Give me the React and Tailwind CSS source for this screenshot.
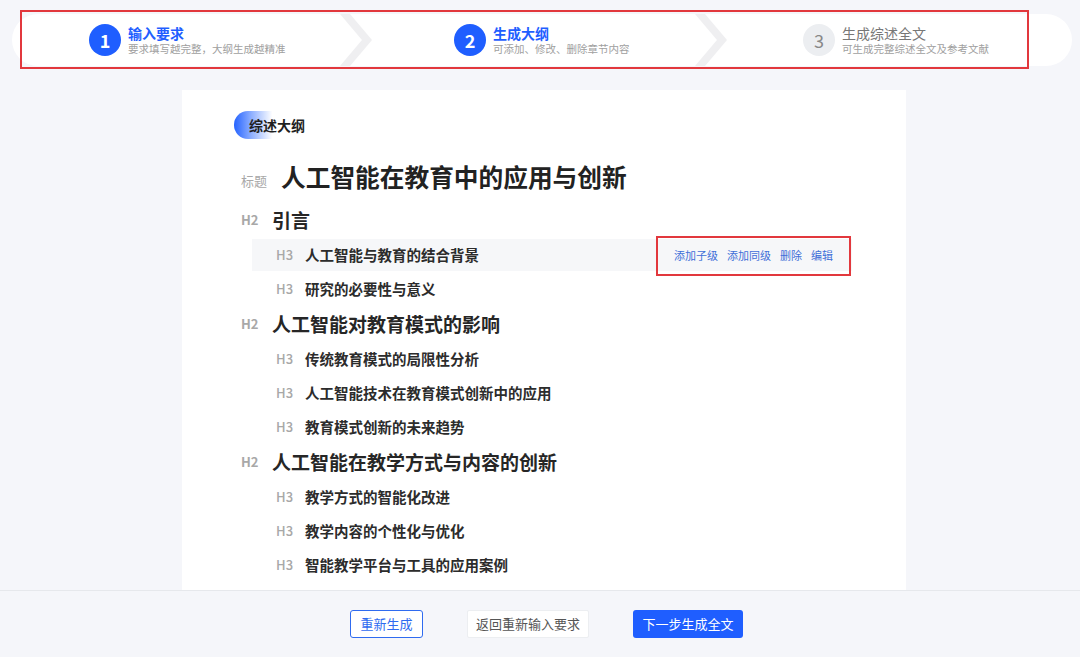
const font = { fontFamily: '"Noto Sans CJK SC", "Noto Sans", sans-serif' };

const Chevron = () => (
    <svg width="32" height="52" viewBox="0 0 32 52" className="shrink-0">
        <polygon points="0,0 10,0 32,26 10,52 0,52 22,26" fill="#efeff1" />
    </svg>
);

const Step = ({ num, title, desc, active, width, pad }) => (
    <div className={`flex items-center h-full shrink-0 ${width} ${pad}`}>
        <div
            className={
                active
                    ? 'w-[32px] h-[32px] rounded-full bg-[#1f5eff] text-white flex items-center justify-center text-[18px] font-bold'
                    : 'w-[32px] h-[32px] rounded-full bg-[#eceef1] text-[#888] flex items-center justify-center text-[18px]'
            }
        >
            {num}
        </div>
        <div className="ml-[7px] flex flex-col leading-none">
            <span className={active ? 'text-[14px] font-bold text-[#1f5eff]' : 'text-[14px] text-[#777]'}>{title}</span>
            <span className="text-[10.5px] text-[#a0a0a0] mt-[4px]">{desc}</span>
        </div>
    </div>
);

const H2 = ({ text }) => (
    <div className="flex items-center h-[36px] pl-[59px]">
        <span className="w-[31px] text-[13px] font-semibold text-[#a8a8a8]">H2</span>
        <span className="text-[19px] font-bold text-[#262626]">{text}</span>
    </div>
);

const H3 = ({ text, hover }) => (
    <div className="h-[34px] flex items-center">
        <div className={`ml-[70px] w-[600px] h-[32px] flex items-center pl-[24px] pr-[19px] ${hover ? 'bg-[#f6f7f9]' : ''}`}>
            <span className="w-[29px] text-[13px] font-medium text-[#a8a8a8]">H3</span>
            <span className="text-[14.5px] font-bold text-[#2c2c2c]">{text}</span>
            {hover && (
                <div className="ml-auto flex gap-[9px] text-[11px] text-[#3f6fd8]">
                    <span>添加子级</span>
                    <span>添加同级</span>
                    <span>删除</span>
                    <span>编辑</span>
                </div>
            )}
        </div>
    </div>
);

export default function App() {
    return (
        <div style={font} className="relative w-[1080px] h-[657px] bg-[#f5f6fa] flex flex-col overflow-hidden">
            {/* steps */}
            <div className="pt-[14px] pl-[12px] pr-[8px]">
                <div className="h-[52px] bg-white rounded-full flex items-center">
                    <Step num="1" title="输入要求" desc="要求填写越完整，大纲生成越精准" active width="w-[328px]" pad="pl-[77px]" />
                    <Chevron />
                    <Step num="2" title="生成大纲" desc="可添加、修改、删除章节内容" active width="w-[323px]" pad="pl-[82px]" />
                    <Chevron />
                    <Step num="3" title="生成综述全文" desc="可生成完整综述全文及参考文献" width="w-[300px]" pad="pl-[76px]" />
                </div>
            </div>

            {/* card */}
            <div className="ml-[182px] mt-[24px] w-[724px] h-[500px] bg-white pt-[21px]">
                <div className="ml-[52px] w-[80px] h-[28px] rounded-l-full bg-[linear-gradient(90deg,#2563ff_0%,#8fb0ff_22%,rgba(255,255,255,0)_48%)] flex items-center pl-[15px]">
                    <span className="text-[14px] font-bold text-[#1f1f1f]">综述大纲</span>
                </div>

                <div className="mt-[18px] mb-[5px] h-[40px] pl-[59px] flex items-center">
                    <span className="w-[40px] text-[13px] text-[#a8a8a8] mt-[8px]">标题</span>
                    <span className="text-[24.7px] font-bold text-[#222]">人工智能在教育中的应用与创新</span>
                </div>

                <H2 text="引言" />
                <H3 text="人工智能与教育的结合背景" hover />
                <H3 text="研究的必要性与意义" />
                <H2 text="人工智能对教育模式的影响" />
                <H3 text="传统教育模式的局限性分析" />
                <H3 text="人工智能技术在教育模式创新中的应用" />
                <H3 text="教育模式创新的未来趋势" />
                <H2 text="人工智能在教学方式与内容的创新" />
                <H3 text="教学方式的智能化改进" />
                <H3 text="教学内容的个性化与优化" />
                <H3 text="智能教学平台与工具的应用案例" />
            </div>

            {/* footer */}
            <div className="flex-1 border-t border-[#e6e8ec] bg-[#f5f6fa] flex items-center">
                <div className="ml-[350px] flex items-center gap-[44px] text-[13px]">
                    <button className="w-[73px] h-[28px] rounded-[3px] border border-[#2f6bf0] bg-white text-[#2f6bf0]">重新生成</button>
                    <button className="w-[122px] h-[28px] rounded-[2px] border border-[#eceef1] bg-white text-[#555]">返回重新输入要求</button>
                    <button className="w-[110px] h-[28px] rounded-[3px] bg-[#1f5eff] text-white">下一步生成全文</button>
                </div>
            </div>

            {/* annotation boxes */}
            <div className="absolute left-[20px] top-[10px] w-[1009px] h-[59px] border-2 border-[#e2383d] pointer-events-none" />
            <div className="absolute left-[656px] top-[236px] w-[195px] h-[40px] border-2 border-[#e2383d] pointer-events-none" />
        </div>
    );
}
